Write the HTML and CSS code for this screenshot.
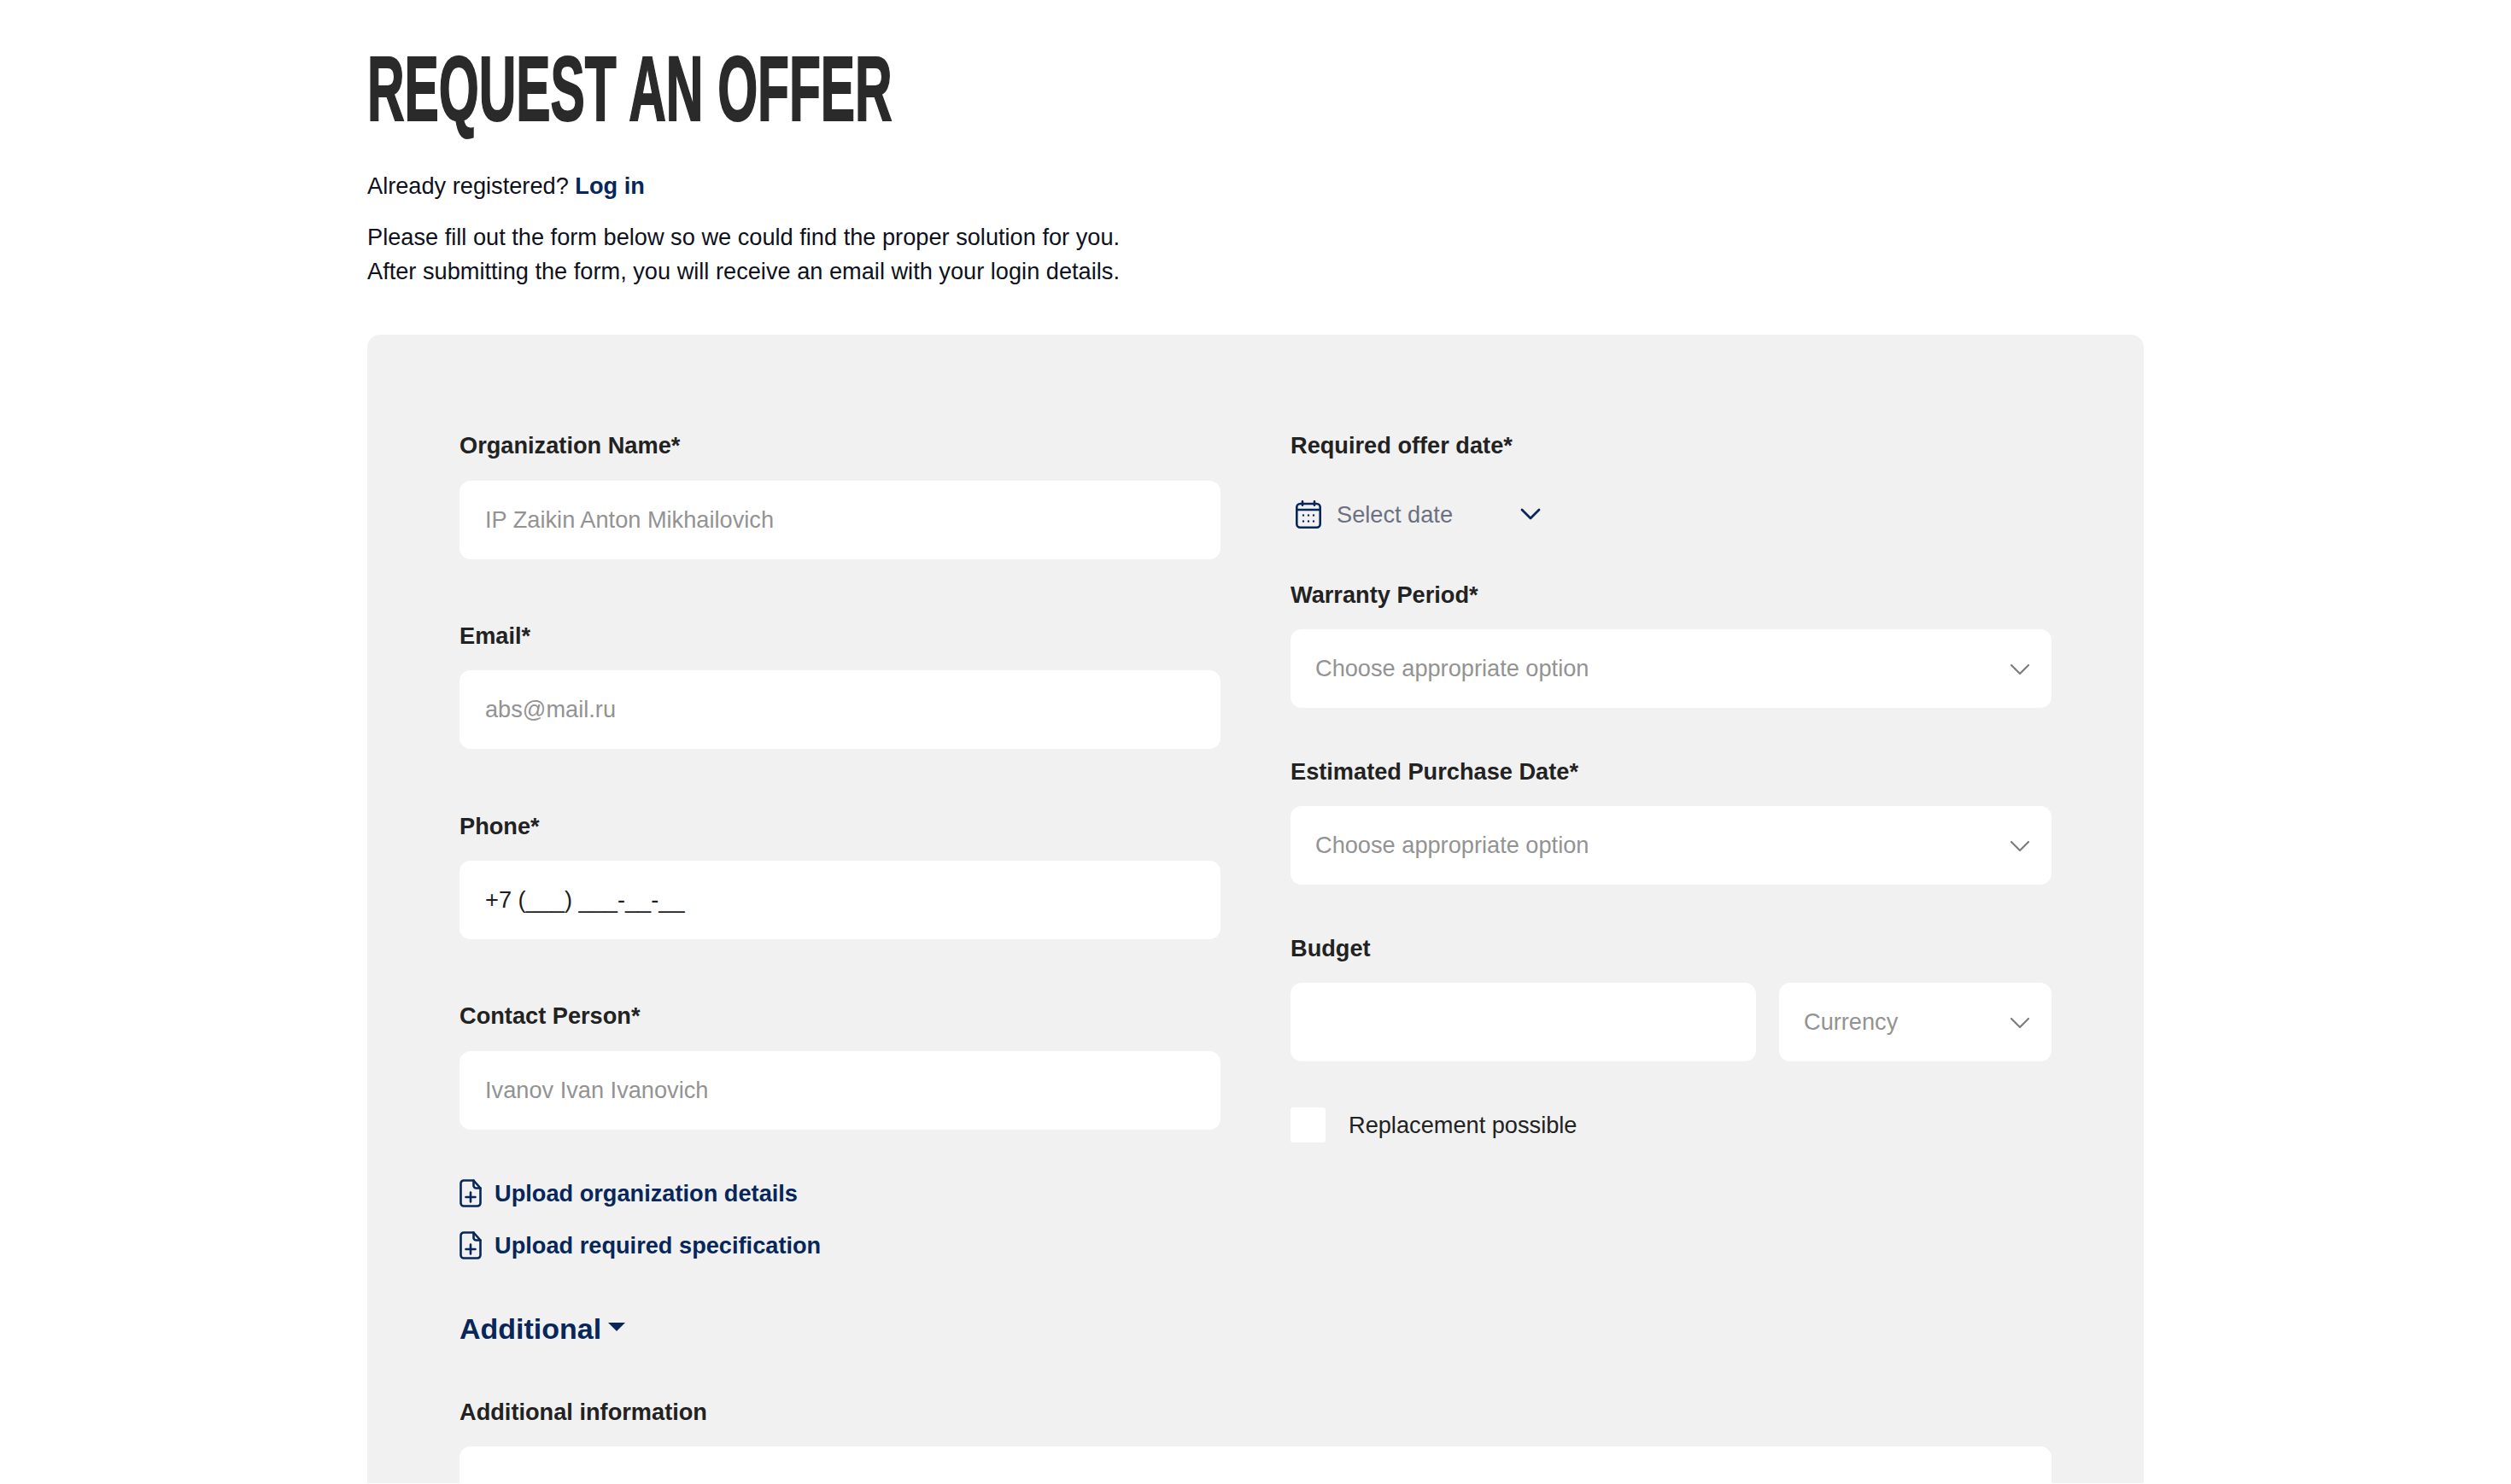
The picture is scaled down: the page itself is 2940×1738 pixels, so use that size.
FILE: index.html
```html
<!DOCTYPE html>
<html lang="en">
<head>
<meta charset="utf-8">
<title>Request an offer</title>
<link rel="stylesheet" href="styles.css">
</head>
<body>
<main class="page">
  <h1 class="title"><span class="title-text">REQUEST AN OFFER</span></h1>
  <p class="intro login-line">Already registered? <a class="link" href="#">Log in</a></p>
  <p class="intro">Please fill out the form below so we could find the proper solution for you.<br>After submitting the form, you will receive an email with your login details.</p>
  <form class="card">
    <div class="columns">
      <div class="col">
        <div class="field"><label class="label">Organization Name*</label><input class="input" placeholder="IP Zaikin Anton Mikhailovich"></div>
        <div class="field"><label class="label">Email*</label><input class="input" placeholder="abs@mail.ru"></div>
        <div class="field"><label class="label">Phone*</label><input class="input filled" value="+7 (___) ___-__-__"></div>
        <div class="field"><label class="label">Contact Person*</label><input class="input" placeholder="Ivanov Ivan Ivanovich"></div>
        <div class="uploads">
          <a class="upload" href="#"><svg class="doc" viewBox="0 0 26 33" fill="none" stroke="currentColor" stroke-width="2.6" stroke-linejoin="round" stroke-linecap="round"><path d="M5 1.5h11.5l8 9V28a3.5 3.5 0 0 1-3.5 3.5H5A3.5 3.5 0 0 1 1.5 28V5A3.5 3.5 0 0 1 5 1.5z"/><path d="M16.5 1.5v6a3 3 0 0 0 3 3h5"/><path d="M13 15.5v11M7.5 21h11"/></svg>Upload organization details</a>
          <a class="upload" href="#"><svg class="doc" viewBox="0 0 26 33" fill="none" stroke="currentColor" stroke-width="2.6" stroke-linejoin="round" stroke-linecap="round"><path d="M5 1.5h11.5l8 9V28a3.5 3.5 0 0 1-3.5 3.5H5A3.5 3.5 0 0 1 1.5 28V5A3.5 3.5 0 0 1 5 1.5z"/><path d="M16.5 1.5v6a3 3 0 0 0 3 3h5"/><path d="M13 15.5v11M7.5 21h11"/></svg>Upload required specification</a>
        </div>
      </div>
      <div class="col">
        <div class="field date-field">
          <label class="label">Required offer date*</label>
          <div class="date">
            <svg class="calendar" viewBox="0 0 30 33" fill="none" stroke="currentColor" stroke-width="2.6" stroke-linecap="round"><rect x="1.3" y="4" width="27.4" height="27.7" rx="4"/><path d="M1.3 11h27.4M8 1.2v4.5M22 1.2v4.5"/><g stroke-width="2.4"><path d="M9 17.5h.01M15 17.5h.01M21 17.5h.01M9 24.5h.01M15 24.5h.01M21 24.5h.01"/></g></svg>
            <span class="date-text">Select date</span>
            <svg class="date-chevron" viewBox="0 0 24 14" fill="none" stroke="currentColor" stroke-width="2.8" stroke-linecap="round" stroke-linejoin="round"><path d="M2 2l10 10L22 2"/></svg>
          </div>
        </div>
        <div class="field tight"><label class="label">Warranty Period*</label>
          <div class="select"><span>Choose appropriate option</span><svg class="chevron" viewBox="0 0 24 14" fill="none" stroke="currentColor" stroke-width="2.2" stroke-linecap="round" stroke-linejoin="round"><path d="M2 2l10 10L22 2"/></svg></div></div>
        <div class="field tight"><label class="label">Estimated Purchase Date*</label>
          <div class="select"><span>Choose appropriate option</span><svg class="chevron" viewBox="0 0 24 14" fill="none" stroke="currentColor" stroke-width="2.2" stroke-linecap="round" stroke-linejoin="round"><path d="M2 2l10 10L22 2"/></svg></div></div>
        <div class="field tight"><label class="label">Budget</label>
          <div class="budget"><input class="input"><div class="select"><span>Currency</span><svg class="chevron" viewBox="0 0 24 14" fill="none" stroke="currentColor" stroke-width="2.2" stroke-linecap="round" stroke-linejoin="round"><path d="M2 2l10 10L22 2"/></svg></div></div></div>
        <label class="check"><span class="box"></span><span>Replacement possible</span></label>
      </div>
    </div>
    <button type="button" class="more">Additional<span class="caret"></span></button>
    <div class="field"><label class="label">Additional information</label><textarea class="area"></textarea></div>
  </form>
</main>
</body>
</html>
```
FILE: styles.css
```css
* { box-sizing: border-box; }
html, body { margin: 0; height: 1738px; overflow: hidden; background: #fff; }
body { font-family: "Liberation Sans", Arial, sans-serif; font-size: 27.2px; line-height: 39.4px; color: #0e1120; }
.page { width: 2080px; height: 1738px; overflow: hidden; margin-left: 430px; padding-top: 1px; }
.title { margin: 0; height: 197px; padding-top: 41px; font-size: 107px; line-height: 124px; font-weight: 700; color: #2a2a2a; white-space: nowrap; }
.title-text { display: inline-block; transform: scaleX(0.564); transform-origin: left center; -webkit-text-stroke: 2px #2a2a2a; }
.intro { margin: 0; }
.login-line { margin-bottom: 21px; }
.link { color: #07265a; font-weight: 700; text-decoration: none; }
.card { margin-top: 55px; background: #f1f1f1; border-radius: 15px 15px 0 0; padding: 110px 108px 0; height: 1345px; overflow: hidden; }
.columns { display: grid; grid-template-columns: 891px 891px; column-gap: 82px; }
.col { display: flex; flex-direction: column; }
.label { display: block; margin-bottom: 21px; font-weight: 700; color: #222; }
.field { margin-bottom: 70.3px; }
.field.tight { margin-bottom: 54.5px; }
.date-field { display: flex; flex-direction: column; margin-bottom: 44.5px; }
.input, .area, .select { display: block; width: 100%; border: 0; border-radius: 13px; background: #fff; font: inherit; outline: none; }
.input { height: 92px; padding: 0 30px; }
.input::placeholder { color: #939393; opacity: 1; }
.filled { color: #1d1d1d; }
.select { position: relative; display: flex; align-items: center; height: 92px; padding: 0 29px; color: #939393; }
.chevron { position: absolute; right: 25px; top: 40px; width: 24px; height: 14px; color: #7d7d7d; }
.date { display: flex; align-items: center; height: 60px; margin-top: 9.6px; padding-left: 6px; }
.calendar { width: 30px; height: 33px; color: #07265a; }
.date-text { margin-left: 18px; width: 215px; color: #6c7080; }
.date-chevron { width: 24px; height: 14px; color: #07265a; }
.budget { display: grid; grid-template-columns: 545px 319px; column-gap: 27px; }
.check { display: flex; align-items: center; gap: 27px; color: #222; }
.box { width: 41px; height: 41px; background: #fff; border-radius: 3px; }
.uploads { display: flex; flex-direction: column; gap: 22px; margin-top: -15px; }
.upload { display: flex; align-items: center; gap: 15px; height: 39px; color: #07265a; font-weight: 700; text-decoration: none; }
.doc { width: 26px; height: 33px; flex: none; }
.more { display: flex; align-items: center; margin: 59px 0 58px; padding: 0; border: 0; background: none; height: 39px; font: 700 34px/39px "Liberation Sans", Arial, sans-serif; color: #07265a; }
.caret { margin: -6px 0 0 8px; width: 0; height: 0; border-left: 10px solid transparent; border-right: 10px solid transparent; border-top: 10px solid #07265a; }
.area { height: 300px; resize: none; }
```
